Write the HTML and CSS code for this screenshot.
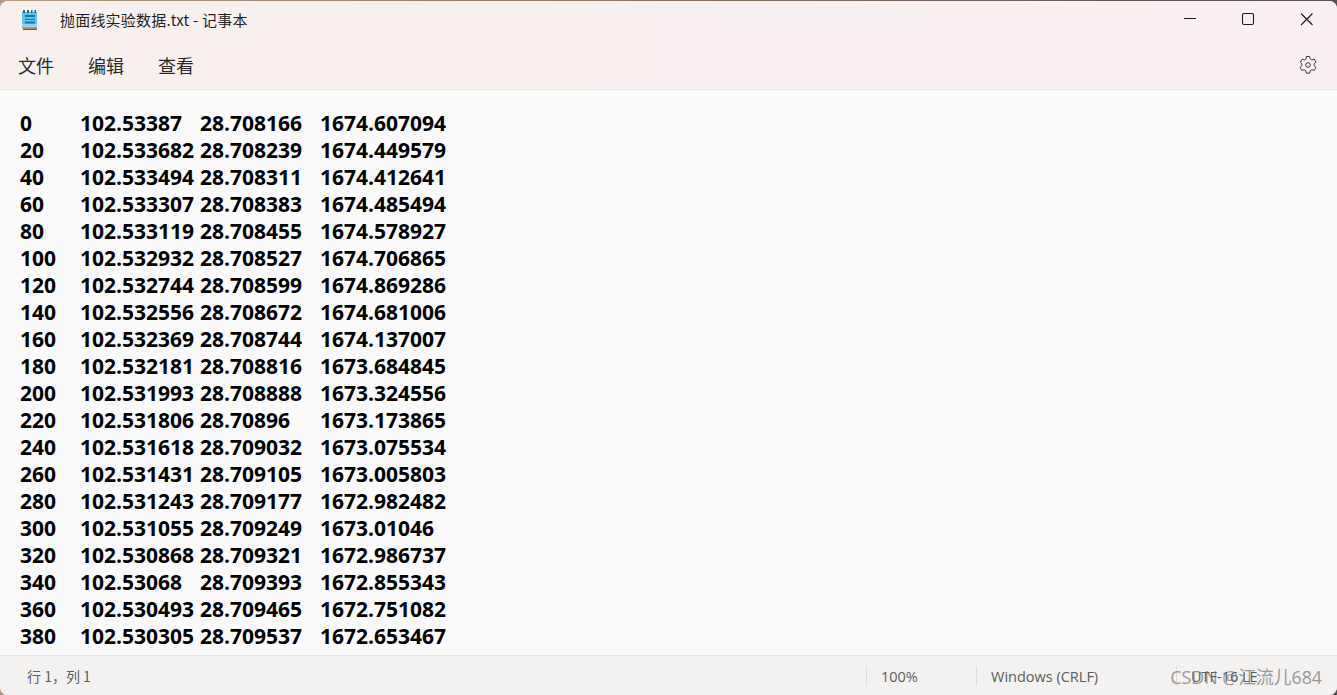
FILE: index.html
```html
<!DOCTYPE html>
<html lang="zh-CN">
<head>
<meta charset="utf-8">
<title>抛面线实验数据.txt - 记事本</title>
<link rel="stylesheet" href="styles.css">
</head>
<body>
<div class="window">
  <header class="chrome">
    <div class="titlebar">
      <svg class="app-icon" width="18" height="22" viewBox="0 0 18 22">
        <rect x="2" y="3" width="15" height="15" fill="#5cc4e8"/>
        <rect x="2" y="15" width="15" height="3" fill="#8ed8ee"/>
        <rect x="2" y="18" width="15" height="1.5" fill="#d98a4e"/>
        <rect x="3" y="19.5" width="14" height="1.5" fill="#9c4a12"/>
        <rect x="3" y="1" width="2" height="3" fill="#0e6f94"/>
        <rect x="7" y="1" width="2" height="3" fill="#0e6f94"/>
        <rect x="11" y="1" width="1.5" height="3" fill="#0e6f94"/>
        <rect x="14.5" y="1" width="1.5" height="3" fill="#0e6f94"/>
        <rect x="5" y="6" width="10" height="2" fill="#0f7ba3"/>
        <rect x="5" y="10" width="10" height="1" fill="#0f7ba3"/>
        <rect x="5" y="12.5" width="10" height="2" fill="#0f7ba3"/>
      </svg>
      <span class="title">抛面线实验数据.txt - 记事本</span>
      <div class="controls">
        <svg class="ctl" width="60" height="40" viewBox="0 0 60 40"><path d="M27 18.500h12" stroke="#1a1a1a" fill="none"/></svg>
        <svg class="ctl" width="60" height="40" viewBox="0 0 60 40"><rect x="25.500" y="13.500" width="11" height="11" rx="1.500" stroke="#1a1a1a" stroke-width="1.100" fill="none"/></svg>
        <svg class="ctl" width="60" height="40" viewBox="0 0 60 40"><path d="M24 13.500l11.500 11.500M35.500 13.500L24 25" stroke="#1a1a1a" stroke-width="1.100" fill="none"/></svg>
      </div>
    </div>
    <nav class="menubar">
      <span class="menu-item">文件</span>
      <span class="menu-item">编辑</span>
      <span class="menu-item">查看</span>
      <svg class="gear" width="20" height="20" viewBox="0 0 20 20">
        <path d="M8.300 1.500h3.400l.6 2.500 1.500.9 2.500-.7 1.700 2.900-1.900 1.800v1.800l1.900 1.800-1.700 2.900-2.500-.7-1.500.9-.6 2.500H8.300l-.6-2.500-1.500-.9-2.500.7-1.700-2.900 1.900-1.800V8.900L2.500 7.100l1.700-2.900 2.500.7 1.500-.9z" fill="none" stroke="#3a3a3a" stroke-width="1" stroke-linejoin="round"/>
        <circle cx="10" cy="10" r="2.300" fill="none" stroke="#3a3a3a" stroke-width="1"/>
      </svg>
    </nav>
  </header>
  <pre class="editor">0	102.53387	28.708166	1674.607094
20	102.533682	28.708239	1674.449579
40	102.533494	28.708311	1674.412641
60	102.533307	28.708383	1674.485494
80	102.533119	28.708455	1674.578927
100	102.532932	28.708527	1674.706865
120	102.532744	28.708599	1674.869286
140	102.532556	28.708672	1674.681006
160	102.532369	28.708744	1674.137007
180	102.532181	28.708816	1673.684845
200	102.531993	28.708888	1673.324556
220	102.531806	28.70896	1673.173865
240	102.531618	28.709032	1673.075534
260	102.531431	28.709105	1673.005803
280	102.531243	28.709177	1672.982482
300	102.531055	28.709249	1673.01046
320	102.530868	28.709321	1672.986737
340	102.53068	28.709393	1672.855343
360	102.530493	28.709465	1672.751082
380	102.530305	28.709537	1672.653467</pre>
  <footer class="statusbar">
    <span class="pos">行 1，列 1</span>
    <span class="cell zoom">100%</span>
    <span class="cell eol">Windows (CRLF)</span>
    <span class="cell enc">UTF-16 LE</span>
  </footer>
  <span class="watermark">CSDN @江流儿684</span>
</div>
</body>
</html>
```
FILE: styles.css
```css
* { box-sizing: border-box; }
html, body { margin: 0; height: 100%; overflow: hidden; }
body {
  font-family: "Open Sans", "Noto Sans CJK SC", sans-serif;
  background: linear-gradient(90deg, #b39c80 0%, #8a7060 50%, #5a5058 100%);
}
.window {
  position: relative;
  width: 1337px;
  height: 694px;
  margin-top: 1px;
  border-radius: 8px;
  overflow: hidden;
  display: flex;
  flex-direction: column;
  background: #fafafa;
}
.chrome {
  height: 89px;
  flex: none;
  background: linear-gradient(90deg, #f8f0ee, #f8f0f2);
  border-bottom: 1px solid #e8e4e3;
}
.titlebar { height: 39px; display: flex; align-items: center; padding-left: 20px; }
.app-icon { flex: none; margin-top: -2px; }
.title {
  margin-left: 22px;
  margin-top: -3px;
  font: 15px "Noto Sans CJK SC", sans-serif;
  letter-spacing: 0.2px;
  color: #1f1f1f;
}
.controls { margin-left: auto; display: flex; margin-top: -1px; }
.ctl { display: block; }
.menubar { height: 49px; display: flex; align-items: center; padding: 0 19px 0 18px; }
.menu-item {
  font: 18px "Noto Sans CJK SC", sans-serif;
  color: #2a2a2a;
  margin-right: 34px;
}
.gear { margin-left: auto; }
.editor {
  flex: 1;
  margin: 0;
  padding: 20px 0 0 20px;
  font: 700 21px/27px "Open Sans", sans-serif;
  tab-size: 60px;
  color: #000;
  overflow: hidden;
}
.statusbar {
  height: 40px;
  flex: none;
  display: flex;
  align-items: center;
  background: #f3f2f1;
  border-top: 1px solid #e4e3e2;
  font: 14.5px "Open Sans", "Noto Sans CJK SC", sans-serif;
  color: #5c5c5c;
}
.pos { padding-left: 27px; width: 866px; font-family: "Noto Sans CJK SC", sans-serif; font-size: 14px; }
.cell { border-left: 1px solid #dedddc; height: 20px; line-height: 21px; padding-left: 14px; }
.zoom { width: 110px; }
.eol { width: 200px; }
.enc { flex: 1; }
.watermark {
  position: absolute;
  right: 15px;
  bottom: 8px;
  font: 17.8px/20px "Open Sans", "Noto Sans CJK SC", sans-serif;
  color: rgba(110, 110, 110, 0.7);
}
```
